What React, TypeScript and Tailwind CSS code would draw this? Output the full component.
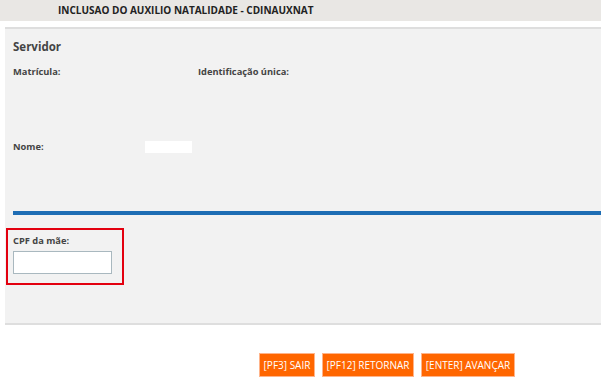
export default function App() {
  const font = { fontFamily: '"Open Sans", "Liberation Sans", sans-serif' }
  return (
    <div className="w-[601px] h-[383px] bg-white overflow-hidden text-[#333]" style={font}>
      {/* Title bar */}
      <div className="h-[21px] bg-[#e9e7e4] pl-[58px] flex items-center">
        <span className="text-[10px] font-bold text-[#222]">
          INCLUSAO DO AUXILIO NATALIDADE - CDINAUXNAT
        </span>
      </div>

      {/* Panel */}
      <div className="mt-[6px] ml-[5px] h-[298px] bg-[#f2f2f2] border-t-2 border-b-2 border-[#dedede] flex flex-col">
        <div className="pl-[8px] pt-[9px]">
          <p className="text-[11.5px] font-bold text-[#444] leading-[18px]">Servidor</p>
        </div>

        <div className="pl-[8px] mt-[9px] flex text-[9.3px] font-bold text-[#444] leading-[14px]">
          <span className="w-[185px]">Matrícula:</span>
          <span>Identificação única:</span>
        </div>

        <div className="pl-[8px] mt-[61px] flex items-start text-[9.3px] font-bold text-[#444] leading-[14px]">
          <span className="w-[132px]">Nome:</span>
          <div className="mt-[1px] w-[47px] h-[12px] bg-white" />
        </div>

        <div className="ml-[8px] mt-[57px] h-[4px] bg-[#1e6db4]" />

        <div className="mt-[13px] ml-[1px] w-[118px] h-[57px] border-2 border-[#e3000f] pl-[5px] pt-[4px]">
          <p className="text-[9.3px] font-bold text-[#444] leading-[14px]">CPF da mãe:</p>
          <input className="mt-[3px] w-[99px] h-[23px] bg-white border border-[#a9b8bf] outline-none" />
        </div>
      </div>

      {/* Buttons */}
      <div className="mt-[28px] pl-[259px] flex gap-[7px]">
        <button className="h-[24px] w-[56px] bg-[#ff6600] border border-[#ffb48a] text-white text-[10px] leading-none">
          [PF3] SAIR
        </button>
        <button className="h-[24px] w-[92px] bg-[#ff6600] border border-[#ffb48a] text-white text-[10px] leading-none">
          [PF12] RETORNAR
        </button>
        <button className="h-[24px] w-[94px] bg-[#ff6600] border border-[#ffb48a] text-white text-[10px] leading-none">
          [ENTER] AVANÇAR
        </button>
      </div>
    </div>
  )
}
